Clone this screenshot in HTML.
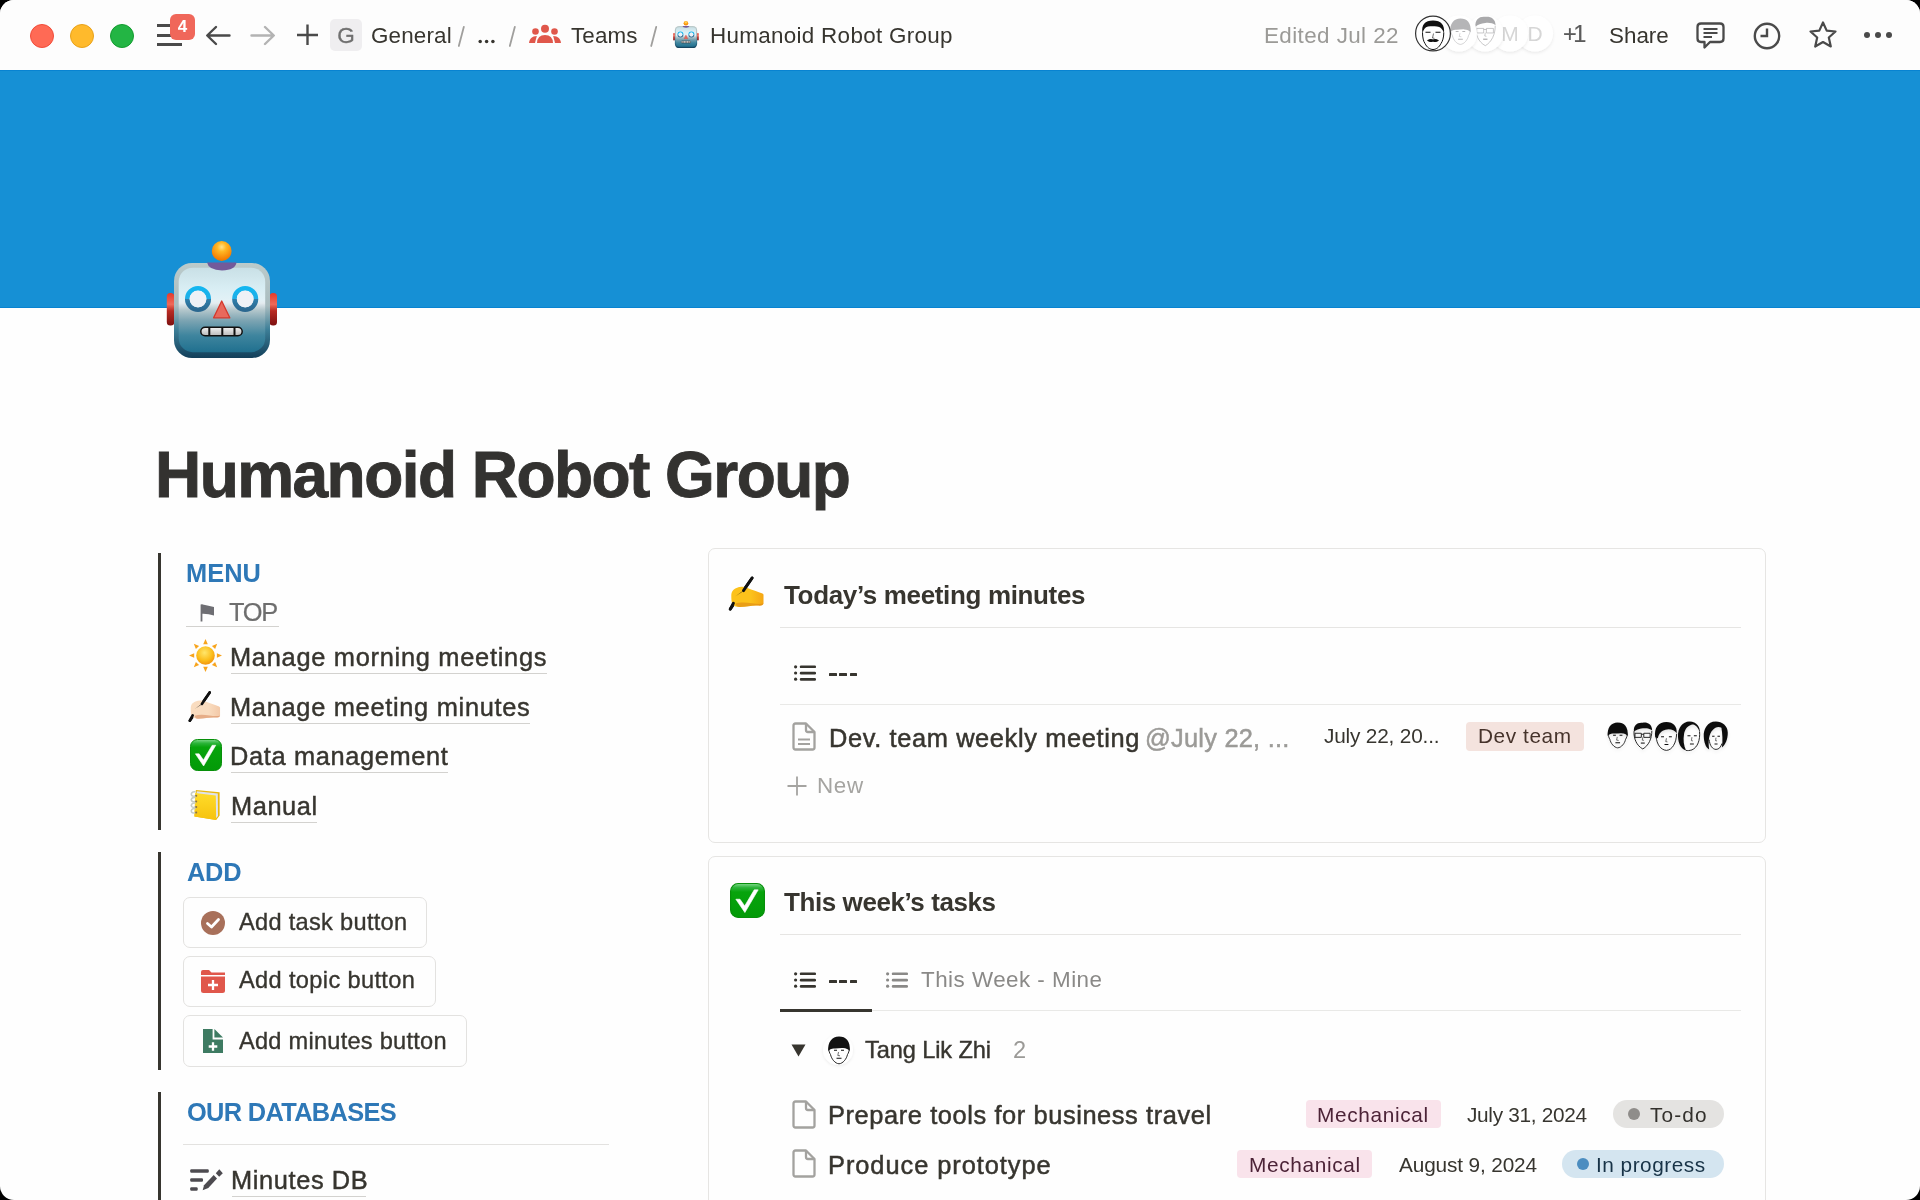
<!DOCTYPE html>
<html><head><meta charset="utf-8"><style>
html,body{margin:0;padding:0;background:#000;width:1920px;height:1200px;overflow:hidden}
#win{position:absolute;left:0;top:0;width:1920px;height:1200px;border-radius:14px;overflow:hidden;background:#fefefe}
.a{position:absolute}
.t{position:absolute;white-space:pre;font-family:"Liberation Sans",sans-serif;will-change:transform}
.d{position:absolute;height:2.7px;width:7.8px;background:#37352f;border-radius:0.5px}
</style></head><body><div id="win">
<div class="a" style="left:0;top:0;width:1920px;height:70px;background:#fdfdfd"></div>
<div class="a" style="left:0;top:70px;width:1920px;height:238px;background:#1690d5;border-top:1px solid #0883d1;border-bottom:1px solid #0883d1;box-sizing:border-box"></div>

<!-- traffic lights -->
<div class="a" style="left:30px;top:24px;width:22px;height:22px;border-radius:50%;background:#ff6a55;border:1px solid #f24c3a"></div>
<div class="a" style="left:70px;top:24px;width:22px;height:22px;border-radius:50%;background:#ffba2c;border:1px solid #e9a21a"></div>
<div class="a" style="left:110px;top:24px;width:22px;height:22px;border-radius:50%;background:#23b544;border:1px solid #139c2f"></div>
<!-- hamburger -->
<div class="a" style="left:157px;top:24px;width:25px;height:3px;background:#4a4a4a"></div>
<div class="a" style="left:157px;top:34px;width:25px;height:3px;background:#4a4a4a"></div>
<div class="a" style="left:157px;top:43px;width:25px;height:3px;background:#4a4a4a"></div>
<div class="a" style="left:170px;top:14px;width:25px;height:26px;border-radius:6px;background:#f0675a;color:#fff;font:700 17px/26px 'Liberation Sans',sans-serif;text-align:center;will-change:transform">4</div>
<!-- back / fwd arrows -->
<svg class="a" style="left:204px;top:24px" width="28" height="23" viewBox="0 0 28 23"><path d="M25.5,11.5 H3.5 M12,3 L3.2,11.5 L12,20" fill="none" stroke="#4a4a4a" stroke-width="2.4" stroke-linecap="round" stroke-linejoin="round"/></svg>
<svg class="a" style="left:249px;top:24px" width="28" height="23" viewBox="0 0 28 23"><path d="M2.5,11.5 H24.5 M16,3 L24.8,11.5 L16,20" fill="none" stroke="#b3b3b3" stroke-width="2.4" stroke-linecap="round" stroke-linejoin="round"/></svg>
<svg class="a" style="left:296px;top:24px" width="23" height="22" viewBox="0 0 23 22"><path d="M11.5,0.5 V21 M1,11 H22" fill="none" stroke="#4a4a4a" stroke-width="2.4"/></svg>
<!-- G box -->
<div class="a" style="left:330px;top:19px;width:32px;height:32px;border-radius:5px;background:#efeef0;color:#707070;font:400 22.5px/33px 'Liberation Sans',sans-serif;text-align:center;-webkit-text-stroke:0.3px #707070;will-change:transform">G</div>
<svg class="a" style="left:440px;top:20px" width="230" height="32" viewBox="440 20 230 32"><path d="M463.8,26.9 L458.8,46 M514.8,26.9 L509.8,46 M656.2,26.9 L651.2,46" stroke="#a09f9d" stroke-width="1.8" stroke-linecap="round"/><circle cx="480.2" cy="41.5" r="1.75" fill="#37352f"/><circle cx="486.6" cy="41.5" r="1.75" fill="#37352f"/><circle cx="492.9" cy="41.5" r="1.75" fill="#37352f"/></svg>
<!-- teams icon -->
<svg class="a" style="left:529px;top:24px" width="33" height="20" viewBox="0 0 33 20">
<circle cx="16" cy="4.8" r="4" fill="#e0574b"/><circle cx="6.5" cy="7.5" r="3.3" fill="#e0574b"/><circle cx="25.5" cy="7.5" r="3.3" fill="#e0574b"/>
<path d="M8,19 Q8.4,11 16,11 Q23.6,11 24,19 Z" fill="#e0574b"/>
<path d="M0,19 C0.4,15 3,12.3 7.8,12.1 L6,19 Z" fill="#e0574b"/>
<path d="M32,19 C31.6,15 29,12.3 24.2,12.1 L26,19 Z" fill="#e0574b"/>
</svg>

<svg class="a" style="left:673px;top:21px" width="26.0" height="27.4" viewBox="0 0 112 118">
<defs>
<linearGradient id="hds" x1="0" y1="0" x2="0" y2="1">
<stop offset="0" stop-color="#c9e0e6"/><stop offset="0.25" stop-color="#d9eef4"/><stop offset="0.38" stop-color="#e2f1f6"/><stop offset="0.42" stop-color="#e4ecf0"/>
<stop offset="0.5" stop-color="#b4c7cc"/><stop offset="0.62" stop-color="#7ea5b3"/><stop offset="0.8" stop-color="#3f859e"/><stop offset="1" stop-color="#20708f"/></linearGradient>
<linearGradient id="rims" x1="0" y1="0" x2="0" y2="1">
<stop offset="0" stop-color="#bccbcb"/><stop offset="0.45" stop-color="#a9bcbf"/><stop offset="0.7" stop-color="#3d7f98"/><stop offset="1" stop-color="#123f5a"/></linearGradient>
<linearGradient id="ears" x1="0" y1="0" x2="0" y2="1"><stop offset="0" stop-color="#e53a2a"/><stop offset="0.35" stop-color="#ef6a5a"/><stop offset="0.55" stop-color="#b82a22"/><stop offset="1" stop-color="#7d1010"/></linearGradient>
<linearGradient id="eyes" x1="0" y1="0" x2="0" y2="1"><stop offset="0" stop-color="#13b6f0"/><stop offset="0.5" stop-color="#20aee6"/><stop offset="0.52" stop-color="#2f7fab"/><stop offset="1" stop-color="#2b6890"/></linearGradient>
<linearGradient id="tooths" x1="0" y1="0" x2="0" y2="1"><stop offset="0" stop-color="#f2f2f2"/><stop offset="1" stop-color="#b9b9b9"/></linearGradient>
<radialGradient id="balls" cx="0.5" cy="0.3" r="0.65"><stop offset="0" stop-color="#ffe38a"/><stop offset="0.35" stop-color="#ffb825"/><stop offset="1" stop-color="#f47a00"/></radialGradient>
</defs>
<rect x="0.8" y="52" width="7.5" height="32.5" rx="3.5" fill="url(#ears)"/>
<rect x="103.5" y="52" width="7.5" height="32.5" rx="3.5" fill="url(#ears)"/>
<rect x="8" y="22" width="96" height="95" rx="18" fill="url(#rims)"/>
<rect x="12.7" y="26.7" width="86.5" height="84.5" rx="14" fill="url(#hds)"/>
<path d="M41,21.5 L70.5,21.5 Q69.5,29 56,29.5 Q42.5,29 41,21.5 Z" fill="#735a9a"/>
<circle cx="55.7" cy="10" r="9.9" fill="url(#balls)"/>
<circle cx="32" cy="58" r="10.7" fill="none" stroke="url(#eyes)" stroke-width="4.7"/>
<circle cx="32" cy="58" r="8.4" fill="#eef1f6"/>
<circle cx="79.2" cy="58" r="10.7" fill="none" stroke="url(#eyes)" stroke-width="4.7"/>
<circle cx="79.2" cy="58" r="8.4" fill="#eef1f6"/>
<path d="M55.7,60 L63.8,76.8 L47.6,76.8 Z" fill="#e8695c" stroke="#d4382c" stroke-width="1.3" stroke-linejoin="round"/>
<rect x="34.8" y="86.2" width="41.4" height="8.6" rx="4.3" fill="url(#tooths)" stroke="#111" stroke-width="1.5"/>
<path d="M43.3,86 V95 M56.3,86 V95 M68.5,86 V95" stroke="#111" stroke-width="2"/>
</svg>
<svg class="a" style="left:1405px;top:10px;will-change:transform" width="160" height="48" viewBox="1405 10 160 48"><defs><filter id="sh" x="-30%" y="-30%" width="160%" height="160%"><feDropShadow dx="0" dy="1.5" stdDeviation="1.5" flood-color="#000" flood-opacity="0.08"/></filter></defs><g filter="url(#sh)"><circle cx="1535" cy="33.5" r="18" fill="#fff"/></g><text x="1535" y="41" text-anchor="middle" font-family="Liberation Sans" font-size="21" fill="#d6d6d6">D</text><g filter="url(#sh)"><circle cx="1510" cy="33.5" r="18" fill="#fff"/></g><text x="1510" y="41" text-anchor="middle" font-family="Liberation Sans" font-size="21" fill="#d6d6d6">M</text><g filter="url(#sh)"><circle cx="1485" cy="33.5" r="18" fill="#fff"/></g><g transform="translate(1474.5,16) scale(1.08)" opacity="1.0"><path d="M1,10 C0,3 5,0 10,0.8 C14,0 19.5,2 19.5,8.5 C17,6.5 13,6 10,6.5 C6,7 3,8 1,10 Z" fill="#a9a9ab"/><path d="M1,9.5 C0.8,17 3.5,24 10,27.5 C16,24 19.2,17 19.2,9 M2,11.5 h6.5 v4.2 h-6.5 Z M11,11.5 h6.5 v4.2 h-6.5 Z M8.5,12.5 h2.5" fill="none" stroke="#a9a9ab" stroke-width="0.6" stroke-linejoin="round"/><path d="M8,21.5 h4" fill="#a9a9ab" stroke="#a9a9ab" stroke-width="1.1"/><path d="M10,15.5 L9.5,18.5 L11,18.8" fill="none" stroke="#a9a9ab" stroke-width="0.6"/></g><g filter="url(#sh)"><circle cx="1459" cy="33.5" r="18" fill="#fff"/></g><g transform="translate(1450,18) scale(0.95)" opacity="1.0"><path d="M0.3,15 C-0.5,6 4,0.5 11,0.5 C18,0.5 22.5,5 21.8,15 C20.5,13.2 18,12.2 15,12 C12,11.8 9,12.6 6,12.4 C3.5,12.3 1.5,13.4 0.3,15 Z" fill="#b5b5b7"/><path d="M0.8,12.5 C0.8,15 1.5,17 2.5,18.5 C3.5,23 7,27.5 11,27.8 C15,27.5 18.5,23 19.5,18.5 C20.5,17 21.2,15 21.2,12.5" fill="none" stroke="#b5b5b7" stroke-width="0.6" stroke-linejoin="round"/><path d="M6,14.3 h3 M13,14.3 h3 M8.5,22.3 h5" fill="#b5b5b7" stroke="#b5b5b7" stroke-width="1.1"/><path d="M10.5,16 L9.8,19.5 L12,19.8" fill="none" stroke="#b5b5b7" stroke-width="0.6"/></g><circle cx="1433" cy="33.5" r="18" fill="#fff"/><g transform="translate(1415,15.5) scale(1.0)" opacity="1.0"><path d="M7.5,18 C6,9 10,5 18,5 C26,5 30,9 29,18 C27.5,13 25,11.5 22,11 C19,10.5 16,10.5 13,11 C10,11.5 8.5,14 7.5,18 Z" fill="#111"/><path d="M7.5,17 C7.5,22 8.5,26 10,28 C12,32 15,34 18,34 C21,34 24,32 26,28 C27.5,26 28.8,22 28.8,17" fill="none" stroke="#111" stroke-width="1.0" stroke-linejoin="round"/><path d="M10.5,16.8 h5 M20.5,16.8 h5 M13,25 C15,23.5 17,24 18,24.5 C19,24 21,23.5 23,25 C21,26.5 19,25.8 18,25.4 C17,25.8 15,26.5 13,25 Z" fill="#111" stroke="#111" stroke-width="1.1"/><path d="M18.5,18 L17.5,22.5 L19.5,22.8" fill="none" stroke="#111" stroke-width="0.6"/></g><circle cx="1433" cy="33.5" r="17.4" fill="none" stroke="#333" stroke-width="1.2"/></svg>

<svg class="a" style="left:1696px;top:22px" width="29" height="27" viewBox="0 0 29 27">
<path d="M5,1.5 H24 Q27.5,1.5 27.5,5 V16.5 Q27.5,20 24,20 H14 L8.5,25.5 V20 H5 Q1.5,20 1.5,16.5 V5 Q1.5,1.5 5,1.5 Z" fill="none" stroke="#4a4a4a" stroke-width="2.3" stroke-linejoin="round"/>
<path d="M7.5,7 H21.5 M7.5,11 H21.5 M7.5,15 H16" stroke="#4a4a4a" stroke-width="2"/>
</svg>
<svg class="a" style="left:1753px;top:22px" width="28" height="28" viewBox="0 0 28 28">
<circle cx="14" cy="14" r="12.2" fill="none" stroke="#4a4a4a" stroke-width="2.4"/>
<path d="M7.5,14 H14 V6.5" fill="none" stroke="#4a4a4a" stroke-width="2.4"/>
</svg>
<svg class="a" style="left:1808px;top:20px" width="30" height="29" viewBox="0 0 30 29">
<path d="M15,2.5 L18.7,10.6 L27.5,11.5 L20.8,17.5 L22.8,26.5 L15,22 L7.2,26.5 L9.2,17.5 L2.5,11.5 L11.3,10.6 Z" fill="none" stroke="#4a4a4a" stroke-width="2.2" stroke-linejoin="round"/>
</svg>
<div class="a" style="left:1864px;top:32px;width:6px;height:6px;border-radius:50%;background:#4a4a4a"></div>
<div class="a" style="left:1875px;top:32px;width:6px;height:6px;border-radius:50%;background:#4a4a4a"></div>
<div class="a" style="left:1886px;top:32px;width:6px;height:6px;border-radius:50%;background:#4a4a4a"></div>

<svg class="a" style="left:166px;top:241px" width="112.0" height="118.0" viewBox="0 0 112 118">
<defs>
<linearGradient id="hdb" x1="0" y1="0" x2="0" y2="1">
<stop offset="0" stop-color="#c9e0e6"/><stop offset="0.25" stop-color="#d9eef4"/><stop offset="0.38" stop-color="#e2f1f6"/><stop offset="0.42" stop-color="#e4ecf0"/>
<stop offset="0.5" stop-color="#b4c7cc"/><stop offset="0.62" stop-color="#7ea5b3"/><stop offset="0.8" stop-color="#3f859e"/><stop offset="1" stop-color="#20708f"/></linearGradient>
<linearGradient id="rimb" x1="0" y1="0" x2="0" y2="1">
<stop offset="0" stop-color="#bccbcb"/><stop offset="0.45" stop-color="#a9bcbf"/><stop offset="0.7" stop-color="#3d7f98"/><stop offset="1" stop-color="#123f5a"/></linearGradient>
<linearGradient id="earb" x1="0" y1="0" x2="0" y2="1"><stop offset="0" stop-color="#e53a2a"/><stop offset="0.35" stop-color="#ef6a5a"/><stop offset="0.55" stop-color="#b82a22"/><stop offset="1" stop-color="#7d1010"/></linearGradient>
<linearGradient id="eyeb" x1="0" y1="0" x2="0" y2="1"><stop offset="0" stop-color="#13b6f0"/><stop offset="0.5" stop-color="#20aee6"/><stop offset="0.52" stop-color="#2f7fab"/><stop offset="1" stop-color="#2b6890"/></linearGradient>
<linearGradient id="toothb" x1="0" y1="0" x2="0" y2="1"><stop offset="0" stop-color="#f2f2f2"/><stop offset="1" stop-color="#b9b9b9"/></linearGradient>
<radialGradient id="ballb" cx="0.5" cy="0.3" r="0.65"><stop offset="0" stop-color="#ffe38a"/><stop offset="0.35" stop-color="#ffb825"/><stop offset="1" stop-color="#f47a00"/></radialGradient>
</defs>
<rect x="0.8" y="52" width="7.5" height="32.5" rx="3.5" fill="url(#earb)"/>
<rect x="103.5" y="52" width="7.5" height="32.5" rx="3.5" fill="url(#earb)"/>
<rect x="8" y="22" width="96" height="95" rx="18" fill="url(#rimb)"/>
<rect x="12.7" y="26.7" width="86.5" height="84.5" rx="14" fill="url(#hdb)"/>
<path d="M41,21.5 L70.5,21.5 Q69.5,29 56,29.5 Q42.5,29 41,21.5 Z" fill="#735a9a"/>
<circle cx="55.7" cy="10" r="9.9" fill="url(#ballb)"/>
<circle cx="32" cy="58" r="10.7" fill="none" stroke="url(#eyeb)" stroke-width="4.7"/>
<circle cx="32" cy="58" r="8.4" fill="#eef1f6"/>
<circle cx="79.2" cy="58" r="10.7" fill="none" stroke="url(#eyeb)" stroke-width="4.7"/>
<circle cx="79.2" cy="58" r="8.4" fill="#eef1f6"/>
<path d="M55.7,60 L63.8,76.8 L47.6,76.8 Z" fill="#e8695c" stroke="#d4382c" stroke-width="1.3" stroke-linejoin="round"/>
<rect x="34.8" y="86.2" width="41.4" height="8.6" rx="4.3" fill="url(#toothb)" stroke="#111" stroke-width="1.5"/>
<path d="M43.3,86 V95 M56.3,86 V95 M68.5,86 V95" stroke="#111" stroke-width="2"/>
</svg>
<!-- left bars -->
<div class="a" style="left:157.5px;top:553px;width:3.5px;height:277px;background:#37352f"></div>
<div class="a" style="left:157.5px;top:852px;width:3.5px;height:218px;background:#37352f"></div>
<div class="a" style="left:157.5px;top:1092px;width:3.5px;height:120px;background:#37352f"></div>
<!-- link underlines -->
<div class="a" style="left:186px;top:626px;width:93px;height:1px;background:#d3d2cf"></div>
<div class="a" style="left:231px;top:673px;width:316px;height:1px;background:#d3d2cf"></div>
<div class="a" style="left:231px;top:723px;width:299px;height:1px;background:#d3d2cf"></div>
<div class="a" style="left:231px;top:772px;width:217px;height:1px;background:#d3d2cf"></div>
<div class="a" style="left:231px;top:822px;width:86px;height:1px;background:#d3d2cf"></div>
<div class="a" style="left:232px;top:1196px;width:134px;height:1px;background:#d3d2cf"></div>
<!-- flag -->
<svg class="a" style="left:200px;top:603px" width="15" height="19" viewBox="0 0 15 19"><path d="M1.5,1.5 V18.5" stroke="#6e6e73" stroke-width="1.8"/><path d="M1.5,1.2 Q7,2.5 14,4 V12.5 Q8,10.5 1.5,10.8 Z" fill="#6e6e73"/></svg>
<svg class="a" style="left:189px;top:639px" width="33" height="33" viewBox="0 0 32 32">
<defs><radialGradient id="sg" cx="0.45" cy="0.35" r="0.7"><stop offset="0" stop-color="#ffe66b"/><stop offset="0.6" stop-color="#fbbd1a"/><stop offset="1" stop-color="#f08c0c"/></radialGradient></defs>
<path d="M32.00,16.00 L27.00,18.20 L27.00,13.80 Z" fill="#f7a41d"/><path d="M27.31,27.31 L22.22,25.33 L25.33,22.22 Z" fill="#f7a41d"/><path d="M16.00,32.00 L13.80,27.00 L18.20,27.00 Z" fill="#f7a41d"/><path d="M4.69,27.31 L6.67,22.22 L9.78,25.33 Z" fill="#f7a41d"/><path d="M0.00,16.00 L5.00,13.80 L5.00,18.20 Z" fill="#f7a41d"/><path d="M4.69,4.69 L9.78,6.67 L6.67,9.78 Z" fill="#f7a41d"/><path d="M16.00,0.00 L18.20,5.00 L13.80,5.00 Z" fill="#f7a41d"/><path d="M27.31,4.69 L25.33,9.78 L22.22,6.67 Z" fill="#f7a41d"/><circle cx="16" cy="16" r="9" fill="url(#sg)"/>
</svg>
<svg class="a" style="left:185.2px;top:686.5px" width="41.0" height="38.2" viewBox="0 0 45 42">
<defs><linearGradient id="hgl" x1="0" y1="0" x2="1" y2="0"><stop offset="0" stop-color="#f9dcbf"/><stop offset="0.6" stop-color="#f9dcbf"/><stop offset="1" stop-color="#f3c9a8"/></linearGradient></defs>
<path d="M27.1,6 L5.25,37.1" stroke="#111" stroke-width="2.9" stroke-linecap="round"/>
<path d="M6.3,24 C6.3,19.5 8,17.5 11.5,16 C14.5,14.6 18.5,14.3 22.5,16 C27,17.8 33,19.8 37.5,21.5 L38.5,22.5 V31.5 C38,33.2 36,33.8 34,33.6 C28,33 22,34.6 15,35 C11.5,35.2 8.5,34 7.3,32 C6.5,30 6.3,27 6.3,24 Z" fill="url(#hgl)"/>
<path d="M10.5,31.5 C15,30 21,30.2 27,31.3 C31,32 35.5,32.3 38.4,31.6 V32 C37.5,33.5 35,33.8 33,33.6 C27,33.2 21.5,34.7 15,35 C12.5,35.1 10.5,33.5 10.5,31 Z" fill="#d7875a" opacity="0.55"/>
<path d="M27.1,6 L18.5,18.6" stroke="#111" stroke-width="2.9" stroke-linecap="round"/>
<path d="M20.2,17.2 L17,20 L10.5,24.3 Z" fill="#111"/>
<path d="M8.4,31.2 L5.25,37.1" stroke="#111" stroke-width="2.9" stroke-linecap="round"/>
</svg>
<svg class="a" style="left:190px;top:739px" width="32" height="32" viewBox="0 0 32 32">
<defs><linearGradient id="cg190" x1="0" y1="0" x2="0" y2="1"><stop offset="0" stop-color="#7fd98a"/><stop offset="0.12" stop-color="#2cb43a"/><stop offset="0.25" stop-color="#07a40c"/><stop offset="1" stop-color="#039a08"/></linearGradient></defs>
<rect x="0.5" y="0.5" width="31" height="31" rx="7" fill="url(#cg190)" stroke="#078f0a" stroke-width="1"/>
<path d="M5.36,14.85 L9.14,14.85 L13.43,20.98 L22.17,6.26 L25.77,6.26 L13.6,27 Z" fill="#fff" stroke="#fff" stroke-width="0.6" stroke-linejoin="round"/>
</svg>
<svg class="a" style="left:185px;top:785px" width="42" height="42" viewBox="0 0 42 42">
<defs><linearGradient id="nbg" x1="0" y1="0" x2="0" y2="1"><stop offset="0" stop-color="#ffdc2a"/><stop offset="1" stop-color="#f6c20e"/></linearGradient></defs>
<path d="M10.85,4.9 L34.65,7.35 L34.65,30.45 L31.15,35 L9.45,31.5 Z" fill="#e9b80c"/>
<path d="M11.8,6.2 L32.8,8.6 L33,31 L31,33.2 L11,30 Z" fill="#dfe2ea"/>
<path d="M10.15,8.05 L30.8,10.5 L31.15,35 L9.45,31.5 Z" fill="url(#nbg)"/>
<path d="M10.5,6.8 C7,6.4 5.6,8.6 6.6,10.2 C7.4,11.4 9.5,11.2 10.5,10.6" fill="none" stroke="#c5ccc4" stroke-width="1.6"/><rect x="10.2" y="9.8" width="2" height="2" rx="0.8" fill="#8c7240"/><path d="M10.5,12.4 C7,12.0 5.6,14.2 6.6,15.8 C7.4,17.0 9.5,16.8 10.5,16.2" fill="none" stroke="#c5ccc4" stroke-width="1.6"/><rect x="10.2" y="15.4" width="2" height="2" rx="0.8" fill="#8c7240"/><path d="M10.5,18.0 C7,17.6 5.6,19.8 6.6,21.4 C7.4,22.6 9.5,22.4 10.5,21.8" fill="none" stroke="#c5ccc4" stroke-width="1.6"/><rect x="10.2" y="21.0" width="2" height="2" rx="0.8" fill="#8c7240"/><path d="M10.5,23.6 C7,23.2 5.6,25.4 6.6,27.0 C7.4,28.2 9.5,28.0 10.5,27.4" fill="none" stroke="#c5ccc4" stroke-width="1.6"/><rect x="10.2" y="26.6" width="2" height="2" rx="0.8" fill="#8c7240"/>
</svg>
<!-- buttons -->
<div class="a" style="left:183px;top:897px;width:244px;height:51px;border:1px solid #e3e2e0;border-radius:7px;box-sizing:border-box"></div>
<div class="a" style="left:183px;top:956px;width:253px;height:51px;border:1px solid #e3e2e0;border-radius:7px;box-sizing:border-box"></div>
<div class="a" style="left:183px;top:1015px;width:284px;height:52px;border:1px solid #e3e2e0;border-radius:7px;box-sizing:border-box"></div>
<svg class="a" style="left:201px;top:911px" width="24" height="24" viewBox="0 0 24 24"><circle cx="12" cy="12" r="12" fill="#a8705a"/><path d="M6.5,12.5 L10.5,16 L17.5,8.5" fill="none" stroke="#fff" stroke-width="2.8" stroke-linecap="round" stroke-linejoin="round"/></svg>
<svg class="a" style="left:201px;top:970px" width="24" height="23" viewBox="0 0 24 23"><path d="M0,2 Q0,0 2,0 H8 L10.5,2.5 H24 V5 H0 Z" fill="#e0574b"/><path d="M0,6.5 H24 V20.5 Q24,23 21.5,23 H2.5 Q0,23 0,20.5 Z" fill="#e0574b"/><path d="M12,10 V20 M7,15 H17" stroke="#fff" stroke-width="2.3"/></svg>
<svg class="a" style="left:203px;top:1029px" width="20" height="24" viewBox="0 0 20 24"><path d="M0,0 H9.6 V10.4 H20 V24 H0 Z" fill="#3e7b62"/><path d="M11.4,0 L20,8.6 H11.4 Z" fill="#3e7b62"/><path d="M10,13.2 V21.8 M5.7,17.5 H14.3" stroke="#fff" stroke-width="2.3"/></svg>
<div class="a" style="left:183px;top:1144px;width:426px;height:1px;background:#e3e2e0"></div>
<svg class="a" style="left:182px;top:1160px" width="50" height="40" viewBox="0 0 50 40"><rect x="8.2" y="9.2" width="18.6" height="3.5" rx="1.2" fill="#4d4b50"/><rect x="8.2" y="18.2" width="12.8" height="3.5" rx="1.2" fill="#4d4b50"/><rect x="8.2" y="27.2" width="7.5" height="3.5" rx="1.2" fill="#4d4b50"/><path d="M31.7,15 L35,18.5 L26.3,28 L20.7,30.3 L22,25.3 Z" fill="#4d4b50"/><path d="M37.3,9.3 L40.8,13.3 L37.2,16.8 L33.8,13.3 Z" fill="#4d4b50"/></svg>
<!-- box 1 -->
<div class="a" style="left:708px;top:548px;width:1058px;height:295px;border:1px solid #e6e5e3;border-radius:7px;box-sizing:border-box"></div>
<svg class="a" style="left:725px;top:572px" width="45.0" height="42.0" viewBox="0 0 45 42">
<defs><linearGradient id="hgh" x1="0" y1="0" x2="1" y2="0"><stop offset="0" stop-color="#fcc21b"/><stop offset="0.6" stop-color="#fcc21b"/><stop offset="1" stop-color="#f5a614"/></linearGradient></defs>
<path d="M27.1,6 L5.25,37.1" stroke="#111" stroke-width="2.9" stroke-linecap="round"/>
<path d="M6.3,24 C6.3,19.5 8,17.5 11.5,16 C14.5,14.6 18.5,14.3 22.5,16 C27,17.8 33,19.8 37.5,21.5 L38.5,22.5 V31.5 C38,33.2 36,33.8 34,33.6 C28,33 22,34.6 15,35 C11.5,35.2 8.5,34 7.3,32 C6.5,30 6.3,27 6.3,24 Z" fill="url(#hgh)"/>
<path d="M10.5,31.5 C15,30 21,30.2 27,31.3 C31,32 35.5,32.3 38.4,31.6 V32 C37.5,33.5 35,33.8 33,33.6 C27,33.2 21.5,34.7 15,35 C12.5,35.1 10.5,33.5 10.5,31 Z" fill="#d98213" opacity="0.55"/>
<path d="M27.1,6 L18.5,18.6" stroke="#111" stroke-width="2.9" stroke-linecap="round"/>
<path d="M20.2,17.2 L17,20 L10.5,24.3 Z" fill="#111"/>
<path d="M8.4,31.2 L5.25,37.1" stroke="#111" stroke-width="2.9" stroke-linecap="round"/>
</svg>
<div class="a" style="left:780px;top:627px;width:961px;height:1px;background:#e6e5e3"></div>
<svg class="a" style="left:793.5px;top:665px" width="22" height="16" viewBox="0 0 22 16">
<circle cx="1.6" cy="1.8" r="1.6" fill="#37352f"/><circle cx="1.6" cy="8" r="1.6" fill="#37352f"/><circle cx="1.6" cy="14.2" r="1.6" fill="#37352f"/>
<rect x="5.8" y="0.4" width="16.2" height="2.7" rx="1.2" fill="#37352f"/><rect x="5.8" y="6.7" width="16.2" height="2.7" rx="1.2" fill="#37352f"/><rect x="5.8" y="13" width="16.2" height="2.7" rx="1.2" fill="#37352f"/>
</svg>
<div class="d" style="left:829px;top:673px"></div><div class="d" style="left:839.2px;top:673px"></div><div class="d" style="left:849.5px;top:673px"></div>
<div class="a" style="left:780px;top:704px;width:961px;height:1px;background:#e9e9e7"></div>
<svg class="a" style="left:792px;top:722px" width="24" height="29" viewBox="0 0 24 29">
<path d="M3.5,1.5 H14 L22.5,10 V25.5 Q22.5,27.5 20.5,27.5 H3.5 Q1.5,27.5 1.5,25.5 V3.5 Q1.5,1.5 3.5,1.5 Z" fill="none" stroke="#a3a29f" stroke-width="2.3" stroke-linejoin="round"/>
<path d="M14,1.5 V8 Q14,10 16,10 H22.5" fill="none" stroke="#a3a29f" stroke-width="2.3" stroke-linejoin="round"/>
</svg>
<svg class="a" style="left:792px;top:722px" width="24" height="29" viewBox="0 0 24 29"><path d="M6,17.5 H18 M6,22 H18" stroke="#a3a29f" stroke-width="2"/></svg>
<div class="a" style="left:1466px;top:722px;width:118px;height:29px;border-radius:4px;background:#f4e3de"></div>
<svg class="a" style="left:1600px;top:712px" width="140" height="46" viewBox="1600 712 140 46"><defs><filter id="sh2" x="-30%" y="-30%" width="160%" height="160%"><feDropShadow dx="0" dy="2" stdDeviation="1.8" flood-color="#000" flood-opacity="0.10"/></filter></defs><g filter="url(#sh2)"><g transform="translate(1607.5,722) scale(0.93)" opacity="1.0"><path d="M0.3,15 C-0.5,6 4,0.5 11,0.5 C18,0.5 22.5,5 21.8,15 C20.5,13.2 18,12.2 15,12 C12,11.8 9,12.6 6,12.4 C3.5,12.3 1.5,13.4 0.3,15 Z" fill="#111"/><path d="M0.8,12.5 C0.8,15 1.5,17 2.5,18.5 C3.5,23 7,27.5 11,27.8 C15,27.5 18.5,23 19.5,18.5 C20.5,17 21.2,15 21.2,12.5" fill="none" stroke="#111" stroke-width="0.9" stroke-linejoin="round"/><path d="M6,14.3 h3 M13,14.3 h3 M8.5,22.3 h5" fill="#111" stroke="#111" stroke-width="1.1"/><path d="M10.5,16 L9.8,19.5 L12,19.8" fill="none" stroke="#111" stroke-width="0.6"/></g><g transform="translate(1633,722) scale(0.98)" opacity="1.0"><path d="M1,10 C0,3 5,0 10,0.8 C14,0 19.5,2 19.5,8.5 C17,6.5 13,6 10,6.5 C6,7 3,8 1,10 Z" fill="#111"/><path d="M1,9.5 C0.8,17 3.5,24 10,27.5 C16,24 19.2,17 19.2,9 M2,11.5 h6.5 v4.2 h-6.5 Z M11,11.5 h6.5 v4.2 h-6.5 Z M8.5,12.5 h2.5" fill="none" stroke="#111" stroke-width="0.9" stroke-linejoin="round"/><path d="M8,21.5 h4" fill="#111" stroke="#111" stroke-width="1.1"/><path d="M10,15.5 L9.5,18.5 L11,18.8" fill="none" stroke="#111" stroke-width="0.6"/></g><g transform="translate(1654.7,721.5) scale(0.98)" opacity="1.0"><path d="M0.5,16 C-0.8,6 4,0.5 12,0.5 C19,0.5 23,5 22.5,12 C20,8.5 15,7 11,8.5 C7,9.5 4.5,12 3.2,17 Z" fill="#111"/><path d="M1.5,15.5 C2,23 6,29 12,29.5 C18,29 22,22 22.4,12.5" fill="none" stroke="#111" stroke-width="0.9" stroke-linejoin="round"/><path d="M6.5,15.5 h3 M14.5,15.5 h3 M10,23.5 h4" fill="#111" stroke="#111" stroke-width="1.1"/><path d="M12,17 L11.3,20.5 L13,20.8" fill="none" stroke="#111" stroke-width="0.6"/></g><g transform="translate(1677.7,721) scale(0.98)" opacity="1.0"><path d="M12,0.5 C5,0.5 0,7 0.3,16 C0.6,23 3.5,28.5 8.5,30 C6,25 5.5,19 6.5,13 C7.5,7.5 11,4 15.5,3.5 C19,4 21.5,7.5 22.5,12 C23.5,7 19.5,0.5 12,0.5 Z" fill="#111"/><path d="M22.3,11 C23,19 20.5,27 14.5,29.5 C12,30.3 10,30.3 8.5,30" fill="none" stroke="#111" stroke-width="0.9" stroke-linejoin="round"/><path d="M10,15 h3 M16.5,15 h3 M12.5,23.5 h4" fill="#111" stroke="#111" stroke-width="1.1"/><path d="M14.5,16.5 L14,20 L15.5,20.3" fill="none" stroke="#111" stroke-width="0.6"/></g><g transform="translate(1702.8,721) scale(0.98)" opacity="1.0"><path d="M13,0.5 C5,0.5 0.5,8 1,16 C1.3,22 3,27 6.5,29 C5.5,22 6,15 9,10.5 C12,6.5 16,5 19,7 C20,13 20.5,20 19.5,27 C23.5,24 25.5,18 25.5,12 C25.5,5 20,0.5 13,0.5 Z" fill="#111"/><path d="M6.5,19 C7,25 10,29 13.5,29 C16.5,29 18.5,26.5 19.5,23" fill="none" stroke="#111" stroke-width="0.9" stroke-linejoin="round"/><path d="M9.5,15.5 h2.5 M15,15.5 h2.5 M12,23.5 h3" fill="#111" stroke="#111" stroke-width="1.1"/><path d="M13.5,17 L13,20 L14.5,20.3" fill="none" stroke="#111" stroke-width="0.6"/></g></g></svg>
<svg class="a" style="left:787px;top:776px" width="20" height="20" viewBox="0 0 20 20"><path d="M10,0.5 V19.5 M0.5,10 H19.5" stroke="#a5a4a1" stroke-width="1.8"/></svg>
<!-- box 2 -->
<div class="a" style="left:708px;top:856px;width:1058px;height:400px;border:1px solid #e6e5e3;border-radius:7px;box-sizing:border-box"></div>
<svg class="a" style="left:730px;top:883px" width="35" height="35" viewBox="0 0 32 32">
<defs><linearGradient id="cg730" x1="0" y1="0" x2="0" y2="1"><stop offset="0" stop-color="#7fd98a"/><stop offset="0.12" stop-color="#2cb43a"/><stop offset="0.25" stop-color="#07a40c"/><stop offset="1" stop-color="#039a08"/></linearGradient></defs>
<rect x="0.5" y="0.5" width="31" height="31" rx="7" fill="url(#cg730)" stroke="#078f0a" stroke-width="1"/>
<path d="M5.36,14.85 L9.14,14.85 L13.43,20.98 L22.17,6.26 L25.77,6.26 L13.6,27 Z" fill="#fff" stroke="#fff" stroke-width="0.6" stroke-linejoin="round"/>
</svg>
<div class="a" style="left:780px;top:934px;width:961px;height:1px;background:#e6e5e3"></div>
<svg class="a" style="left:794px;top:972px" width="22" height="16" viewBox="0 0 22 16">
<circle cx="1.6" cy="1.8" r="1.6" fill="#37352f"/><circle cx="1.6" cy="8" r="1.6" fill="#37352f"/><circle cx="1.6" cy="14.2" r="1.6" fill="#37352f"/>
<rect x="5.8" y="0.4" width="16.2" height="2.7" rx="1.2" fill="#37352f"/><rect x="5.8" y="6.7" width="16.2" height="2.7" rx="1.2" fill="#37352f"/><rect x="5.8" y="13" width="16.2" height="2.7" rx="1.2" fill="#37352f"/>
</svg>
<div class="d" style="left:829px;top:980px"></div><div class="d" style="left:839.2px;top:980px"></div><div class="d" style="left:849.5px;top:980px"></div>
<svg class="a" style="left:886px;top:972px" width="22" height="16" viewBox="0 0 22 16">
<circle cx="1.6" cy="1.8" r="1.6" fill="#8a8987"/><circle cx="1.6" cy="8" r="1.6" fill="#8a8987"/><circle cx="1.6" cy="14.2" r="1.6" fill="#8a8987"/>
<rect x="5.8" y="0.4" width="16.2" height="2.7" rx="1.2" fill="#8a8987"/><rect x="5.8" y="6.7" width="16.2" height="2.7" rx="1.2" fill="#8a8987"/><rect x="5.8" y="13" width="16.2" height="2.7" rx="1.2" fill="#8a8987"/>
</svg>
<div class="a" style="left:780px;top:1010px;width:961px;height:1px;background:#e9e9e7"></div>
<div class="a" style="left:780px;top:1009px;width:92px;height:3px;background:#37352f"></div>
<svg class="a" style="left:791px;top:1044px" width="15" height="13" viewBox="0 0 15 13"><path d="M0.5,0.5 H14.5 L7.5,12.5 Z" fill="#37352f"/></svg>
<svg class="a" style="left:818px;top:1030px" width="40" height="40" viewBox="0 0 40 40"><defs><filter id="sh3" x="-30%" y="-30%" width="160%" height="160%"><feDropShadow dx="0" dy="1" stdDeviation="1.5" flood-color="#000" flood-opacity="0.08"/></filter></defs><g filter="url(#sh3)"><circle cx="20" cy="20" r="15" fill="#fff"/></g><g transform="translate(10,6) scale(1.0)" opacity="1.0"><path d="M0.3,15 C-0.5,6 4,0.5 11,0.5 C18,0.5 22.5,5 21.8,15 C20.5,13.2 18,12.2 15,12 C12,11.8 9,12.6 6,12.4 C3.5,12.3 1.5,13.4 0.3,15 Z" fill="#111"/><path d="M0.8,12.5 C0.8,15 1.5,17 2.5,18.5 C3.5,23 7,27.5 11,27.8 C15,27.5 18.5,23 19.5,18.5 C20.5,17 21.2,15 21.2,12.5" fill="none" stroke="#111" stroke-width="0.9" stroke-linejoin="round"/><path d="M6,14.3 h3 M13,14.3 h3 M8.5,22.3 h5" fill="#111" stroke="#111" stroke-width="1.1"/><path d="M10.5,16 L9.8,19.5 L12,19.8" fill="none" stroke="#111" stroke-width="0.6"/></g></svg>
<svg class="a" style="left:792px;top:1100px" width="24" height="29" viewBox="0 0 24 29">
<path d="M3.5,1.5 H14 L22.5,10 V25.5 Q22.5,27.5 20.5,27.5 H3.5 Q1.5,27.5 1.5,25.5 V3.5 Q1.5,1.5 3.5,1.5 Z" fill="none" stroke="#a3a29f" stroke-width="2.3" stroke-linejoin="round"/>
<path d="M14,1.5 V8 Q14,10 16,10 H22.5" fill="none" stroke="#a3a29f" stroke-width="2.3" stroke-linejoin="round"/>
</svg>
<svg class="a" style="left:792px;top:1149px" width="24" height="29" viewBox="0 0 24 29">
<path d="M3.5,1.5 H14 L22.5,10 V25.5 Q22.5,27.5 20.5,27.5 H3.5 Q1.5,27.5 1.5,25.5 V3.5 Q1.5,1.5 3.5,1.5 Z" fill="none" stroke="#a3a29f" stroke-width="2.3" stroke-linejoin="round"/>
<path d="M14,1.5 V8 Q14,10 16,10 H22.5" fill="none" stroke="#a3a29f" stroke-width="2.3" stroke-linejoin="round"/>
</svg>
<div class="a" style="left:1306px;top:1100px;width:135px;height:28px;border-radius:4px;background:#f9e3eb"></div>
<div class="a" style="left:1613px;top:1100px;width:111px;height:28px;border-radius:14px;background:#e4e3e1"></div>
<div class="a" style="left:1628px;top:1108px;width:12px;height:12px;border-radius:50%;background:#8f8d8a"></div>
<div class="a" style="left:1237px;top:1150px;width:135px;height:28px;border-radius:4px;background:#f9e3eb"></div>
<div class="a" style="left:1562px;top:1150px;width:162px;height:28px;border-radius:14px;background:#d4e5f0"></div>
<div class="a" style="left:1577px;top:1158px;width:12px;height:12px;border-radius:50%;background:#4c8dc0"></div>
<div class="t" style="left:371.0px;top:24.9px;font-size:22.4px;line-height:22.4px;color:#37352f;font-weight:400;letter-spacing:0.167px;-webkit-text-stroke:0px #37352f;">General</div>
<div class="t" style="left:571.0px;top:24.9px;font-size:22.4px;line-height:22.4px;color:#37352f;font-weight:400;letter-spacing:0.150px;-webkit-text-stroke:0px #37352f;">Teams</div>
<div class="t" style="left:710.4px;top:24.9px;font-size:22.4px;line-height:22.4px;color:#37352f;font-weight:400;letter-spacing:0.316px;-webkit-text-stroke:0px #37352f;">Humanoid Robot Group</div>
<div class="t" style="left:1264.0px;top:24.9px;font-size:22.4px;line-height:22.4px;color:#9b9a97;font-weight:400;letter-spacing:0.417px;-webkit-text-stroke:0px #9b9a97;">Edited Jul 22</div>
<div class="t" style="left:1563.0px;top:23.3px;font-size:23.5px;line-height:23.5px;color:#5a5a5a;font-weight:400;letter-spacing:-3.500px;-webkit-text-stroke:0.2px #5a5a5a;">+1</div>
<div class="t" style="left:1609.0px;top:24.9px;font-size:22.4px;line-height:22.4px;color:#37352f;font-weight:400;letter-spacing:0.000px;-webkit-text-stroke:0px #37352f;">Share</div>
<div class="t" style="left:155.0px;top:443.4px;font-size:64px;line-height:64px;color:#333230;font-weight:700;letter-spacing:-1.547px;-webkit-text-stroke:0.9px #333230;">Humanoid Robot Group</div>
<div class="t" style="left:185.8px;top:561.1px;font-size:25.4px;line-height:25.4px;color:#2e78b7;font-weight:700;letter-spacing:0.067px;-webkit-text-stroke:0px #2e78b7;">MENU</div>
<div class="t" style="left:229.0px;top:599.8px;font-size:25.4px;line-height:25.4px;color:#6e6e6e;font-weight:400;letter-spacing:-1.250px;-webkit-text-stroke:0.2px #6e6e6e;">TOP</div>
<div class="t" style="left:230.0px;top:644.6px;font-size:25.4px;line-height:25.4px;color:#37352f;font-weight:400;letter-spacing:0.718px;-webkit-text-stroke:0.45px #37352f;">Manage morning meetings</div>
<div class="t" style="left:230.0px;top:694.9px;font-size:25.4px;line-height:25.4px;color:#37352f;font-weight:400;letter-spacing:0.700px;-webkit-text-stroke:0.45px #37352f;">Manage meeting minutes</div>
<div class="t" style="left:230.0px;top:743.6px;font-size:25.4px;line-height:25.4px;color:#37352f;font-weight:400;letter-spacing:0.643px;-webkit-text-stroke:0.45px #37352f;">Data management</div>
<div class="t" style="left:230.8px;top:794.0px;font-size:25.4px;line-height:25.4px;color:#37352f;font-weight:400;letter-spacing:0.560px;-webkit-text-stroke:0.45px #37352f;">Manual</div>
<div class="t" style="left:186.5px;top:859.6px;font-size:25.4px;line-height:25.4px;color:#2e78b7;font-weight:700;letter-spacing:-0.250px;-webkit-text-stroke:0px #2e78b7;">ADD</div>
<div class="t" style="left:239.4px;top:910.9px;font-size:23.6px;line-height:23.6px;color:#37352f;font-weight:400;letter-spacing:0.300px;-webkit-text-stroke:0.35px #37352f;">Add task button</div>
<div class="t" style="left:239.4px;top:969.4px;font-size:23.6px;line-height:23.6px;color:#37352f;font-weight:400;letter-spacing:0.353px;-webkit-text-stroke:0.35px #37352f;">Add topic button</div>
<div class="t" style="left:239.4px;top:1029.6px;font-size:23.6px;line-height:23.6px;color:#37352f;font-weight:400;letter-spacing:0.247px;-webkit-text-stroke:0.35px #37352f;">Add minutes button</div>
<div class="t" style="left:186.5px;top:1100.1px;font-size:25.4px;line-height:25.4px;color:#2e78b7;font-weight:700;letter-spacing:-0.675px;-webkit-text-stroke:0px #2e78b7;">OUR DATABASES</div>
<div class="t" style="left:230.5px;top:1167.7px;font-size:25.4px;line-height:25.4px;color:#37352f;font-weight:400;letter-spacing:0.611px;-webkit-text-stroke:0.45px #37352f;">Minutes DB</div>
<div class="t" style="left:783.7px;top:581.8px;font-size:26px;line-height:26px;color:#37352f;font-weight:700;letter-spacing:-0.350px;-webkit-text-stroke:0px #37352f;">Today’s meeting minutes</div>
<div class="t" style="left:828.6px;top:725.8px;font-size:25.4px;line-height:25.4px;color:#37352f;font-weight:400;letter-spacing:0.626px;-webkit-text-stroke:0.5px #37352f;">Dev. team weekly meeting</div>
<div class="t" style="left:1145.0px;top:725.8px;font-size:25.4px;line-height:25.4px;color:#9b9a97;font-weight:400;letter-spacing:0.233px;-webkit-text-stroke:0.5px #9b9a97;">@July 22, ...</div>
<div class="t" style="left:1324.4px;top:726.0px;font-size:20.8px;line-height:20.8px;color:#37352f;font-weight:400;letter-spacing:-0.185px;-webkit-text-stroke:0px #37352f;">July 22, 20...</div>
<div class="t" style="left:1478.0px;top:726.0px;font-size:20.8px;line-height:20.8px;color:#46332b;font-weight:400;letter-spacing:0.571px;-webkit-text-stroke:0px #46332b;">Dev team</div>
<div class="t" style="left:816.7px;top:774.6px;font-size:22.4px;line-height:22.4px;color:#a5a4a1;font-weight:400;letter-spacing:0.650px;-webkit-text-stroke:0px #a5a4a1;">New</div>
<div class="t" style="left:783.7px;top:889.2px;font-size:26px;line-height:26px;color:#37352f;font-weight:700;letter-spacing:-0.419px;-webkit-text-stroke:0px #37352f;">This week’s tasks</div>
<div class="t" style="left:920.8px;top:969.3px;font-size:22.4px;line-height:22.4px;color:#8a8987;font-weight:400;letter-spacing:0.480px;-webkit-text-stroke:0px #8a8987;">This Week - Mine</div>
<div class="t" style="left:865.4px;top:1039.1px;font-size:23.6px;line-height:23.6px;color:#37352f;font-weight:400;letter-spacing:-0.109px;-webkit-text-stroke:0.4px #37352f;">Tang Lik Zhi</div>
<div class="t" style="left:1013.4px;top:1039.1px;font-size:23.6px;line-height:23.6px;color:#9b9a97;font-weight:400;letter-spacing:0.000px;-webkit-text-stroke:0px #9b9a97;">2</div>
<div class="t" style="left:827.8px;top:1103.3px;font-size:25.4px;line-height:25.4px;color:#37352f;font-weight:400;letter-spacing:0.594px;-webkit-text-stroke:0.5px #37352f;">Prepare tools for business travel</div>
<div class="t" style="left:827.8px;top:1152.8px;font-size:25.4px;line-height:25.4px;color:#37352f;font-weight:400;letter-spacing:0.950px;-webkit-text-stroke:0.5px #37352f;">Produce prototype</div>
<div class="t" style="left:1317.3px;top:1105.0px;font-size:20.8px;line-height:20.8px;color:#4c2337;font-weight:400;letter-spacing:0.656px;-webkit-text-stroke:0px #4c2337;">Mechanical</div>
<div class="t" style="left:1467.4px;top:1105.0px;font-size:20.8px;line-height:20.8px;color:#37352f;font-weight:400;letter-spacing:-0.308px;-webkit-text-stroke:0px #37352f;">July 31, 2024</div>
<div class="t" style="left:1649.5px;top:1105.0px;font-size:20.8px;line-height:20.8px;color:#32302c;font-weight:400;letter-spacing:1.125px;-webkit-text-stroke:0px #32302c;">To-do</div>
<div class="t" style="left:1249.0px;top:1155.0px;font-size:20.8px;line-height:20.8px;color:#4c2337;font-weight:400;letter-spacing:0.667px;-webkit-text-stroke:0px #4c2337;">Mechanical</div>
<div class="t" style="left:1398.8px;top:1155.0px;font-size:20.8px;line-height:20.8px;color:#37352f;font-weight:400;letter-spacing:-0.138px;-webkit-text-stroke:0px #37352f;">August 9, 2024</div>
<div class="t" style="left:1596.0px;top:1155.0px;font-size:20.8px;line-height:20.8px;color:#183347;font-weight:400;letter-spacing:0.500px;-webkit-text-stroke:0px #183347;">In progress</div>
</div></body></html>
